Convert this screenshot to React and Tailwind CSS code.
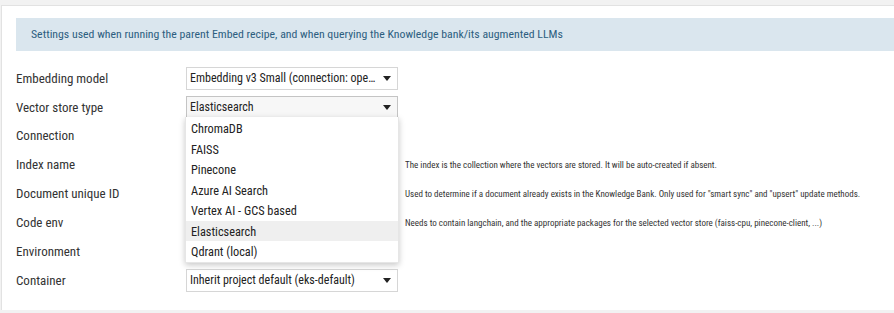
import React from "react";

const labels = [
  "Embedding model",
  "Vector store type",
  "Connection",
  "Index name",
  "Document unique ID",
  "Code env",
  "Environment",
  "Container",
];

const options = [
  "ChromaDB",
  "FAISS",
  "Pinecone",
  "Azure AI Search",
  "Vertex AI - GCS based",
  "Elasticsearch",
  "Qdrant (local)",
];

function Caret() {
  return (
    <svg width="8" height="5" viewBox="0 0 8 5" className="shrink-0">
      <path d="M0 0 L8 0 L4 5 Z" fill="#222" />
    </svg>
  );
}

function Select({ value, active }) {
  return (
    <div
      className={`w-[212px] h-[23px] border ${active ? "border-[#c4c4c4] bg-[#f7f7f7]" : "border-[#d6d6d6] bg-white"} flex items-center justify-between pl-[3px] pr-[6px] text-[12px] text-[#222]`}
    >
      <span className="whitespace-nowrap">{value}</span>
      <Caret />
    </div>
  );
}

function Help({ children }) {
  return (
    <div className="h-[28.86px] flex items-center pt-[2px] pl-[219px] text-[9px] text-[#333] whitespace-nowrap">
      {children}
    </div>
  );
}

export default function App() {
  const font = { fontFamily: "'Roboto Condensed', Lato, 'Liberation Sans', sans-serif" };
  return (
    <div className="w-[894px] h-[313px] bg-[#f2f2f2] overflow-hidden" style={font}>
      <div className="mt-[5px] ml-[1px] h-[305px] bg-white border-t border-l border-[#e2e2e2] pt-[12px] pl-[14px]">
        <div className="h-[33px] bg-[#dae6ee] flex items-center pl-[15px] text-[11.8px] text-[#2d5e80]">
          Settings used when running the parent Embed recipe, and when querying the Knowledge bank/its augmented LLMs
        </div>
        <div className="relative mt-[13px] flex">
          <div className="w-[170px] flex flex-col">
            {labels.map((l) => (
              <div key={l} className="h-[28.86px] flex items-center text-[13px] text-[#333]">
                {l}
              </div>
            ))}
          </div>
          <div className="flex flex-col">
            <div className="h-[28.86px] flex items-center">
              <Select value="Embedding v3 Small (connection: ope…" />
            </div>
            <div className="h-[28.86px] flex items-center">
              <Select value="Elasticsearch" active />
            </div>
            <div className="h-[28.86px]" />
            <Help>The index is the collection where the vectors are stored. It will be auto-created if absent.</Help>
            <Help>
              Used to determine if a document already exists in the Knowledge Bank. Only used for "smart sync" and "upsert" update methods.
            </Help>
            <Help>
              Needs to contain langchain, and the appropriate packages for the selected vector store (faiss-cpu, pinecone-client, ...)
            </Help>
            <div className="h-[28.86px]" />
            <div className="h-[28.86px] flex items-center">
              <Select value="Inherit project default (eks-default)" />
            </div>
          </div>
          <div className="absolute left-[169px] top-[53px] w-[214px] bg-white pt-[1px] shadow-[0_2px_6px_rgba(0,0,0,0.22)] border border-[#e6e6e6] border-t-0">
            {options.map((o) => (
              <div
                key={o}
                className={`h-[20.5px] flex items-center pt-[2px] pl-[5px] text-[12.3px] text-[#222] ${o === "Elasticsearch" ? "bg-[#efefef]" : ""}`}
              >
                {o}
              </div>
            ))}
          </div>
        </div>
      </div>
    </div>
  );
}
